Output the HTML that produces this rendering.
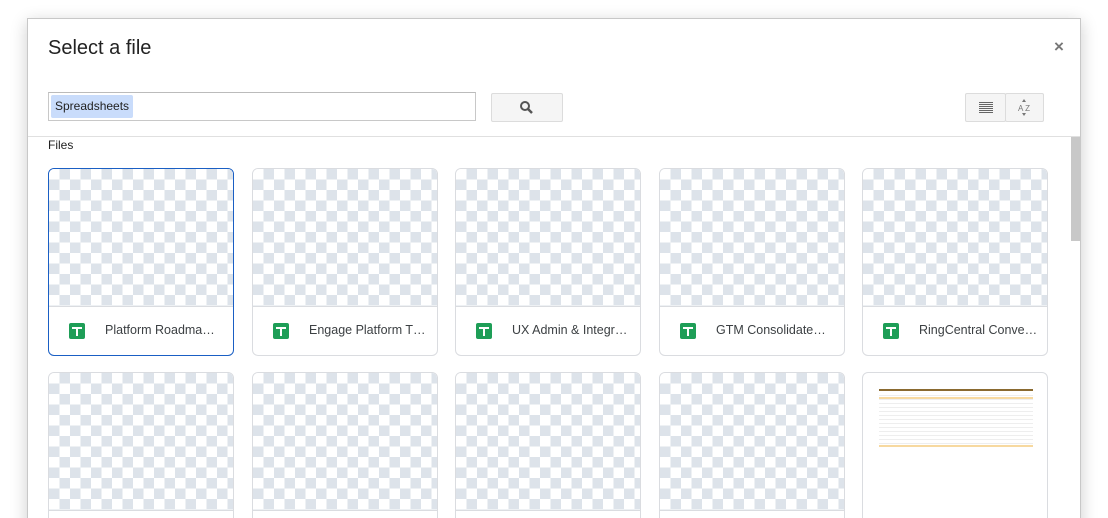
<!DOCTYPE html>
<html style="overflow:hidden;height:518px"><head><style>
body{margin:0;width:1108px;height:518px;overflow:hidden;background:#fff;font-family:"Liberation Sans",Arial,sans-serif;position:relative}
.wrap{position:absolute;left:0;top:0;width:1108px;height:518px;overflow:hidden}
.dlg{position:absolute;left:27px;top:18px;width:1052px;height:510px;background:#fff;border:1px solid #c8c8c8;box-shadow:0 4px 16px rgba(0,0,0,.2)}
.title{position:absolute;left:20px;top:18px;font-size:20px;color:#222}
.close{position:absolute;left:1026px;top:18px;font-size:17px;color:#777;font-weight:bold}
.inp{position:absolute;left:20px;top:73px;width:426px;height:27px;border:1px solid #c8c8c8;border-top-color:#bbb}
.chip{position:absolute;left:2px;top:2px;height:23px;line-height:23px;padding:0 4px;background:#c9dcfb;border-radius:2px;font-size:12px;color:#222}
.btn{position:absolute;top:74px;height:27px;background:#f5f5f5;border:1px solid #dcdcdc;border-radius:2px}
.div{position:absolute;left:0;top:117px;width:1052px;height:1px;background:#e0e0e0}
.sb{position:absolute;left:1043px;top:118px;width:9px;height:104px;background:#c8c8c8}
.files{position:absolute;left:20px;top:119px;font-size:12px;color:#222}
.card{position:absolute;width:184px;height:186px;border:1px solid #dadce0;border-radius:6px;overflow:hidden;background:#fff}
.card.sel{border-color:#1a5fc4}
.chk{position:absolute;left:0;top:0;width:184px;height:137px;background-color:#fff;background-image:linear-gradient(45deg,#dde3ea 25%,transparent 25%,transparent 75%,#dde3ea 75%),linear-gradient(45deg,#dde3ea 25%,transparent 25%,transparent 75%,#dde3ea 75%);background-size:21px 21px;background-position:0 0,10.5px 10.5px;border-bottom:1px solid #dadce0}
.ic{position:absolute;left:20px;top:154px;width:16px;height:16px;background:#1e9e57;border-radius:2px}
.ic:before{content:"";position:absolute;left:3px;top:4px;width:10px;height:2px;background:#fff}
.ic:after{content:"";position:absolute;left:7px;top:4px;width:2px;height:9px;background:#fff}
.nm{position:absolute;left:56px;top:154px;font-size:12.5px;color:#3c4043}
</style></head><body><div class="wrap">
<div class="dlg">
<div class="title">Select a file</div>
<div class="close">×</div>
<div class="inp"><div class="chip">Spreadsheets</div></div>
<div class="btn" style="left:463px;width:70px"><svg width="70" height="27"><circle cx="33" cy="12" r="4" fill="none" stroke="#555" stroke-width="2"/><path d="M36 15l4 4" stroke="#555" stroke-width="2.5"/></svg></div>
<div class="btn" style="left:937px;width:39px"><svg width="39" height="27"><path d="M13 8.5h14M13 10.5h14M13 12.5h14M13 14.5h14M13 16.5h14M13 18.5h14" stroke="#666" stroke-width="1" shape-rendering="crispEdges"/></svg></div>
<div class="btn" style="left:977px;width:37px"><svg width="37" height="27"><path d="M16 8l2-3 2 3zM16 19l2 3 2-3z" fill="#777"/><text x="12" y="17" font-size="8" fill="#777" font-family="Liberation Sans">A Z</text></svg></div>
<div class="div"></div>
<div class="sb"></div>
<div class="files">Files</div>
</div>
<div class="card sel" style="left:48px;top:168px"><div class="chk"></div><div class="ic"></div><div class="nm">Platform Roadma…</div></div>
<div class="card" style="left:252px;top:168px"><div class="chk"></div><div class="ic"></div><div class="nm">Engage Platform T…</div></div>
<div class="card" style="left:455px;top:168px"><div class="chk"></div><div class="ic"></div><div class="nm">UX Admin &amp; Integr…</div></div>
<div class="card" style="left:659px;top:168px"><div class="chk"></div><div class="ic"></div><div class="nm">GTM Consolidate…</div></div>
<div class="card" style="left:862px;top:168px"><div class="chk"></div><div class="ic"></div><div class="nm">RingCentral Conve…</div></div>
<div class="card" style="left:48px;top:372px"><div class="chk"></div></div>
<div class="card" style="left:252px;top:372px"><div class="chk"></div></div>
<div class="card" style="left:455px;top:372px"><div class="chk"></div></div>
<div class="card" style="left:659px;top:372px"><div class="chk"></div></div>
<div class="card" style="left:862px;top:372px"><div style="position:absolute;left:16px;top:16px;width:154px;height:2px;background:#8a6a30"></div><div style="position:absolute;left:16px;top:19px;width:154px;height:54px;background:repeating-linear-gradient(#fff 0,#fff 3px,#eee 3px,#eee 4px)"></div><div style="position:absolute;left:16px;top:24px;width:154px;height:2px;background:#f7d9a0"></div><div style="position:absolute;left:16px;top:72px;width:154px;height:2px;background:#f7d9a0"></div></div>
</div></body></html>
